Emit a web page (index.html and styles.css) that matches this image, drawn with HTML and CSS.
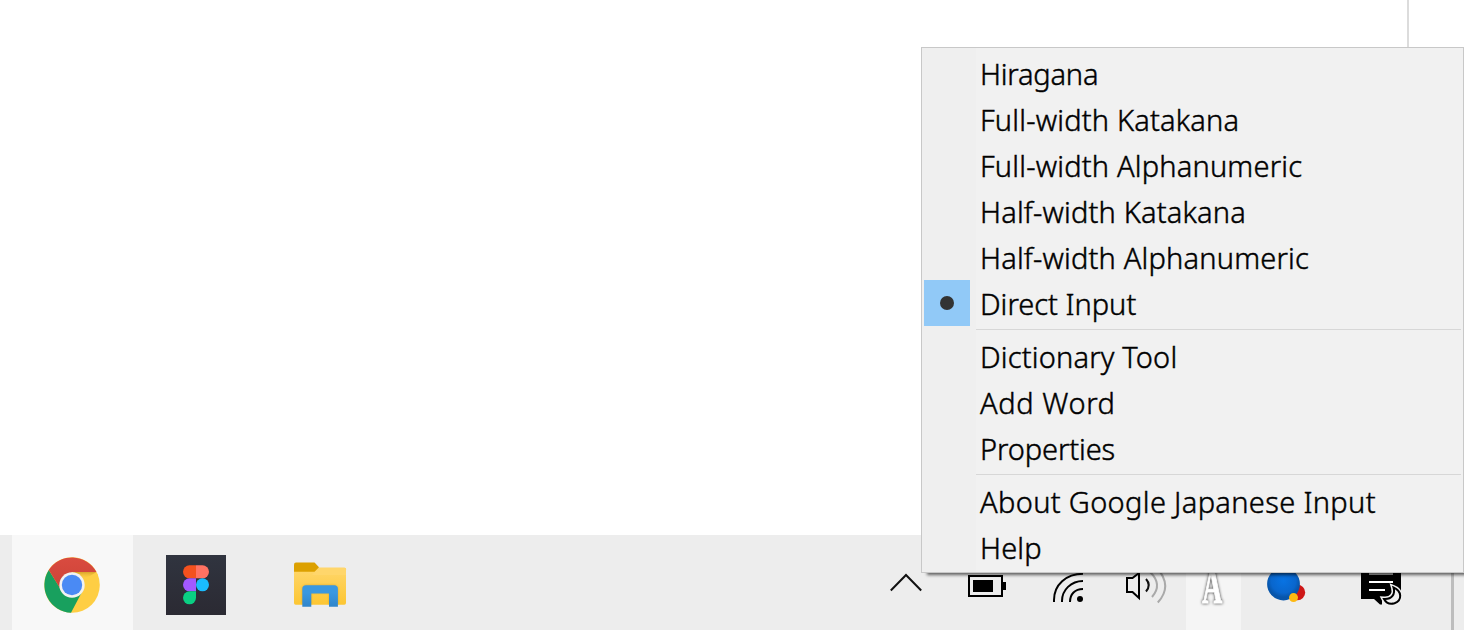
FILE: index.html
```html
<!DOCTYPE html>
<html lang="en">
<head>
<meta charset="utf-8">
<title>Input mode menu</title>
<link rel="stylesheet" href="styles.css">
</head>
<body>
<div class="desktop">
  <main class="window"><div class="window-edge"></div></main>
  <footer class="taskbar">
    <div class="apps">
      <div class="app app-active">
        <svg width="121" height="95" viewBox="12 535 121 95">
          <defs>
            <linearGradient id="red" x2="0" y2="1"><stop stop-color="#d94b40"/><stop offset="1" stop-color="#cd4337"/></linearGradient>
            <linearGradient id="shade" x2="0" y2="1"><stop stop-color="#b98116" stop-opacity=".55"/><stop offset="1" stop-color="#fdcb42" stop-opacity="0"/></linearGradient>
          </defs>
          <circle cx="72" cy="585" r="27.8" fill="#fece44"/>
          <path d="M72 572H96.500L90 576 82 579Z" fill="url(#shade)"/>
          <path d="M48.800 570A27.800 27.800 0 0 0 71 612.800L83 590 72 585 60 588Z" fill="#18a05e"/>
          <path d="M48.800 570A27.800 27.800 0 0 1 96.500 572H72L60.500 589Z" fill="url(#red)"/>
          <circle cx="72" cy="585" r="12.700" fill="#f2f2f2"/>
          <circle cx="72" cy="585" r="10.200" fill="#4a8af4"/>
        </svg>
      </div>
      <div class="app">
        <svg width="124" height="95" viewBox="133 535 124 95">
          <defs><linearGradient id="tile" x2="0" y2="1"><stop stop-color="#30343f"/><stop offset="1" stop-color="#2b2a33"/></linearGradient></defs>
          <path d="M166 555h60v60h-60z" fill="url(#tile)"/>
          <path d="M196 565.300h-6.500a6.500 6.500 0 0 0 0 13H196z" fill="#f4511e"/>
          <path d="M196 565.300h6.500a6.500 6.500 0 0 1 0 13H196z" fill="#ff7262"/>
          <path d="M196 578.300h-6.500a6.500 6.500 0 0 0 0 13H196z" fill="#a259ff"/>
          <circle cx="202.500" cy="584.800" r="6.500" fill="#1abcfe"/>
          <path d="M196 591.300h-6.500a6.500 6.500 0 1 0 6.500 6.500z" fill="#0acf83"/>
        </svg>
      </div>
      <div class="app">
        <svg width="124" height="95" viewBox="257 535 124 95">
          <defs>
            <linearGradient id="folder" x2="0" y2="1"><stop stop-color="#ffd66b"/><stop offset="1" stop-color="#fcc633"/></linearGradient>
            <linearGradient id="blue" x2="0" y2="1"><stop offset=".35" stop-color="#3a98e0"/><stop offset="1" stop-color="#3085ca"/></linearGradient>
            <filter id="soft"><feGaussianBlur stdDeviation="1.300"/></filter>
          </defs>
          <path d="M294 568h52v35q0 1.700-1.700 1.700h-48.600q-1.700 0-1.700-1.700z" fill="url(#folder)"/>
          <path d="M318 567.500h26.300q1.700 0 1.700 1.700V575h-34z" fill="#ffd66b"/>
          <path d="M302 604v-14q0-5 5-5h26q5 0 5 5v14h-9v-11h-18v11z" fill="#c38d1c" opacity=".55" filter="url(#soft)"/>
          <path d="M294 564.500q0-2 2-2h18.500l4.500 4.700-4.500 4.500H294z" fill="#dca000"/>
          <path d="M302.300 606.800V588.800q0-3.600 3.600-3.600h28.400q3.600 0 3.600 3.600v18H329v-13.300h-17.700v13.300z" fill="url(#blue)"/>
        </svg>
      </div>
    </div>
    <div class="tray">
      <svg width="64" height="95" viewBox="874 535 64 95"><path d="M890.800 590.500 906 575l15.200 15.500" fill="none" stroke="#111" stroke-width="2"/></svg>
      <svg width="94" height="95" viewBox="938 535 94 95"><path d="M969 576h33v20h-33z" fill="none" stroke="#000" stroke-width="2"/><path d="M973 580h20v12h-20zM1003 582h3v8h-3z"/></svg>
      <svg width="77" height="95" viewBox="1032 535 77 95"><g fill="none" stroke="#000" stroke-width="2"><path d="M1054 602v-2c0-15 12-26.200 29-26.200M1062 602v-1c0-11 9-20 21-20M1070 602c0-8 5-13 13-13"/></g><circle cx="1080" cy="599" r="3"/></svg>
      <svg width="77" height="95" viewBox="1109 535 77 95"><path d="M1127 578h5.500l6.500-5v25l-6.500-6H1127z" fill="none" stroke="#000" stroke-width="2"/><path d="M1146 579q5.500 6 0 12.500" fill="none" stroke="#111" stroke-width="2"/><path d="M1150 572q13 12.500 2 25M1157 568q16 18 0.800 34.500" fill="none" stroke="#a9a9a9" stroke-width="2"/></svg>
      <svg class="ime" width="55" height="95" viewBox="1186 535 55 95"><text class="ime-letter" x="1212.300" y="602.500" text-anchor="middle" textLength="20" lengthAdjust="spacingAndGlyphs">A</text></svg>
      <svg width="90" height="95" viewBox="1241 535 90 95">
        <defs><radialGradient id="ball" cy=".4"><stop stop-color="#0873e3"/><stop offset=".75" stop-color="#0966cd"/><stop offset="1" stop-color="#0755aa"/></radialGradient></defs>
        <circle cx="1297.500" cy="592.500" r="7.700" fill="#ce1717"/><circle cx="1283.500" cy="584" r="16.400" fill="url(#ball)"/><circle cx="1293.500" cy="597.600" r="4.500" fill="#fdb912"/>
      </svg>
      <svg width="120" height="95" viewBox="1331 535 120 95">
        <path d="M1361 570h40v25l-12 4h-7v5.500h-2l-6-5.500h-13z"/><path d="M1369 573h24v2h-24z" fill="#aaa"/><path d="M1369 581h24v2h-24zM1369 589h16v2h-16z" fill="#fff"/>
        <path d="M1393.500 587.500c8.500 3.500 9 13 1 15.800-4.500 1.200-8.500-.5-10.500-4.300 8 .5 11.500-5 9.500-11.500z" fill="#f0f0f0" stroke="#f0f0f0" stroke-width="5"/>
        <path d="M1393.500 587.500c8.500 3.500 9 13 1 15.800-4.500 1.200-8.500-.5-10.500-4.300 8 .5 11.500-5 9.500-11.500z" fill="#f0f0f0" stroke="#000" stroke-width="2"/>
      </svg>
      <div class="show-desktop"></div>
    </div>
  </footer>
  <nav class="menu">
    <ul class="menu-list">
      <li class="item"><span class="mark"></span><span class="label fit-hiragana">Hiragana</span></li>
      <li class="item"><span class="mark"></span><span class="label">Full-width Katakana</span></li>
      <li class="item"><span class="mark"></span><span class="label">Full-width Alphanumeric</span></li>
      <li class="item"><span class="mark"></span><span class="label">Half-width Katakana</span></li>
      <li class="item"><span class="mark"></span><span class="label">Half-width Alphanumeric</span></li>
      <li class="item"><span class="mark selected"></span><span class="label fit-direct">Direct Input</span></li>
      <li class="separator"></li>
      <li class="item"><span class="mark"></span><span class="label">Dictionary Tool</span></li>
      <li class="item"><span class="mark"></span><span class="label fit-add">Add Word</span></li>
      <li class="item"><span class="mark"></span><span class="label fit-properties">Properties</span></li>
      <li class="separator"></li>
      <li class="item"><span class="mark"></span><span class="label fit-about">About Google Japanese Input</span></li>
      <li class="item"><span class="mark"></span><span class="label">Help</span></li>
    </ul>
  </nav>
</div>
</body>
</html>
```
FILE: styles.css
```css
* { box-sizing: border-box; }
body { margin: 0; background: #fff; font-family: "Noto Sans", "Open Sans", sans-serif; }
svg { display: block; flex: none; }
.desktop { position: relative; width: 1464px; height: 630px; overflow: hidden; display: flex; flex-direction: column; }
.window { flex: 1; display: flex; justify-content: flex-end; padding-right: 55px; }
.window-edge { width: 2px; background: #dcdcdc; }
.taskbar { height: 95px; background: #ededed; display: flex; justify-content: space-between; }
.apps { display: flex; padding-left: 12px; }
.app-active { background: #f8f8f8; }
.tray { display: flex; }
.ime { background: #f5f5f5; }
.ime-letter { font: bold 51px "Liberation Serif", serif; fill: #fff; stroke: #fff; stroke-width: 1.2px; filter: drop-shadow(0 0 1.5px #333); }
.show-desktop { width: 13px; border-left: 3px solid #bdbdbd; }
.menu { position: absolute; left: 921px; top: 47px; width: 543px; height: 526px; padding: 2px; border: 1px solid #c8c8c8; background: linear-gradient(90deg, #efefef 54px, #f1f1f1 54px); box-shadow: 5px 3px 3px -1px rgba(0, 0, 0, .6); }
.menu-list { list-style: none; margin: 0; padding: 0; }
.item { display: flex; height: 46px; gap: 10px; }
.mark { width: 46px; height: 46px; flex: none; display: flex; align-items: center; justify-content: center; }
.selected { background: #91c9f7; }
.selected::before { content: ""; width: 14px; height: 14px; border-radius: 50%; background: #333; }
.label { font-size: 29px; font-weight: 300; line-height: 48px; letter-spacing: .18px; white-space: nowrap; color: #000; -webkit-text-stroke: .45px #000; }
.fit-hiragana { letter-spacing: -.2px; }
.fit-direct { letter-spacing: 0; }
.fit-add { letter-spacing: .6px; }
.fit-properties { letter-spacing: -.1px; }
.fit-about { letter-spacing: .34px; }
.separator { height: 7px; margin-left: 52px; padding-top: 3px; }
.separator::before { content: ""; display: block; height: 1px; background: #d7d7d7; }
```
